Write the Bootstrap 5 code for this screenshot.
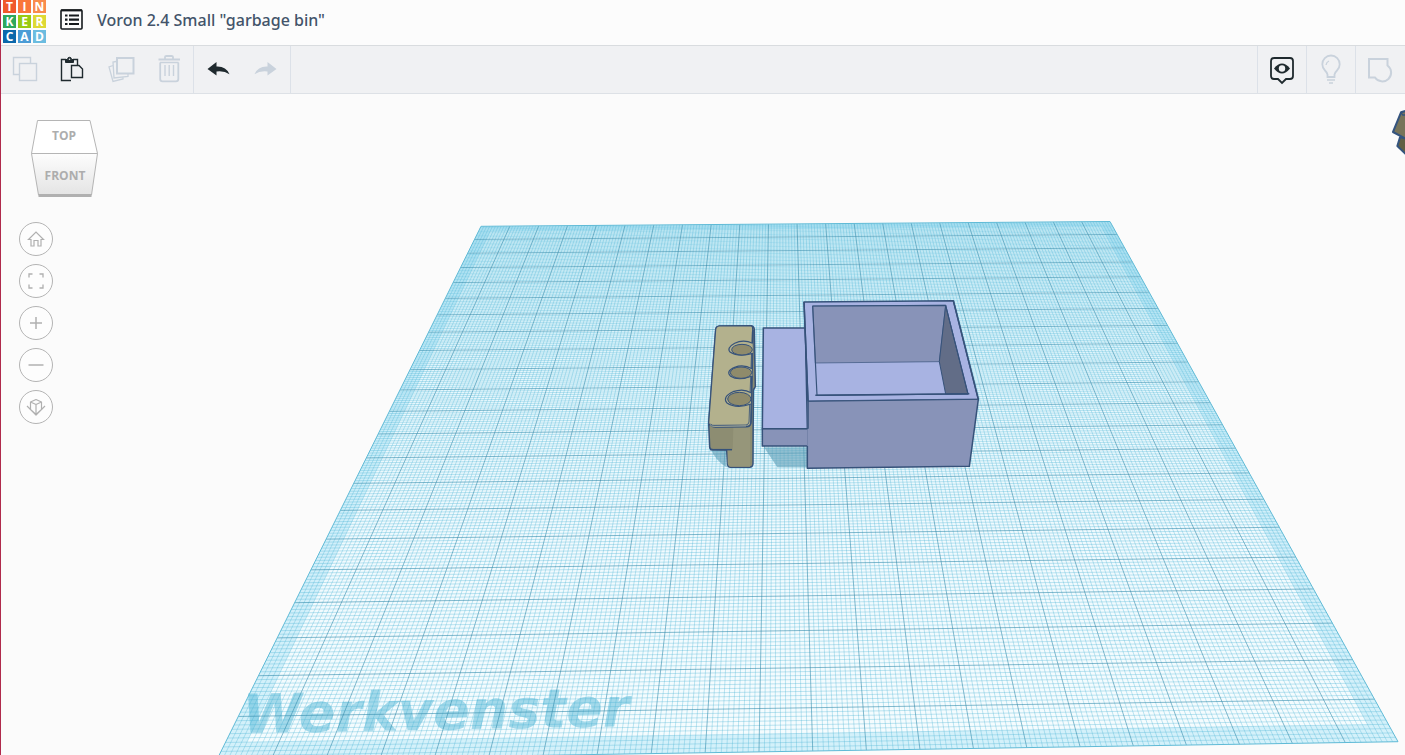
<!DOCTYPE html>
<html lang="nl">
<head>
<meta charset="utf-8">
<meta name="viewport" content="width=device-width, initial-scale=1">
<title>Voron 2.4 Small "garbage bin"</title>
<link href="https://cdn.jsdelivr.net/npm/bootstrap@5.3.0/dist/css/bootstrap.min.css" rel="stylesheet">
<style>
  body { font-family: "Noto Sans", sans-serif; background: #fbfbfb; border-left: 1px solid #b02a4c; }
  .top-bar { height: 45px; padding-bottom: 6px; background: #fcfcfc; }
  .logo { display: grid; grid-template-columns: repeat(3, 13px); grid-auto-rows: 13px; gap: 2px; width: 43px; margin-left: 2px; margin-right: 14px; }
  .logo span { font: 700 12px/13px "Open Sans", sans-serif; color: #fff; text-align: center; }
  .title { font-size: 16px; line-height: 24px; font-weight: 500; color: #43546a; }
  .tools { height: 49px; background: #f0f1f3; border-top: 1px solid #d9dcdf; border-bottom: 1px solid #dde1e6; }
  .tool { width: 48px; height: 47px; padding: 0; border: 0; background: none; color: #1f2a2e; }
  .tool:disabled { color: #c9d2dc; }
  .tool svg, .nav-round svg, .menu-btn svg { display: block; }
  .group-edge { border-right: 1px solid #dce1e8; }
  .tool.cell { width: 49px; border-left: 1px solid #dce1e8; }
  .tool.cell:last-child { width: 50px; }
  .menu-btn { padding: 0; border: 0; background: none; margin-right: 13px; }
  .side { padding: 24px 0 0 18px; width: 120px; }
  .cube { margin-left: 10px; margin-bottom: 16px; padding: 0; border: 0; background: none; width: 72px; height: 80px; }
  .nav-round { width: 34px; height: 34px; padding: 0; border: 1px solid #b4b4b4; border-radius: 50%; background: #fdfdfd; color: #b0b0b0; }
  .cube text { font: 700 12px "Open Sans", sans-serif; fill: #adadad; }
  .plane-name { font: italic 700 54px "DejaVu Sans", sans-serif; fill: #4bb4d6; fill-opacity: .48; }
</style>
</head>
<body class="vh-100 d-flex flex-column overflow-hidden">

<header class="top-bar d-flex align-items-center flex-shrink-0">
  <a class="logo align-self-start text-decoration-none" href="#" aria-label="Tinkercad">
    <span style="background:#f0592b">T</span><span style="background:#f9763a">I</span><span style="background:#f98b4c">N</span>
    <span style="background:#2fa85c">K</span><span style="background:#98cb12">E</span><span style="background:#ded935">R</span>
    <span style="background:#0b68ab">C</span><span style="background:#4b9cd6">A</span><span style="background:#6bbce0">D</span>
  </a>
  <button class="menu-btn" type="button" aria-label="Designs">
    <svg width="24" height="24" viewBox="0 0 24 24" fill="none" stroke="#15191c">
      <rect x="1" y="2" width="21" height="19" rx="1" stroke-width="1.6"/>
      <path d="M1 2.4H22" stroke-width="2"/>
      <path d="M5 7.5H7.5M5 11.7H7.5M5 16H7.5M9 7.5H19M9 11.7H19M9 16H19" stroke-width="2.2"/>
    </svg>
  </button>
  <h1 class="title m-0 text-nowrap">Voron 2.4 Small "garbage bin"</h1>
</header>

<div class="tools d-flex flex-shrink-0" role="toolbar">
  <button class="tool" type="button" disabled aria-label="Copy"><svg width="48" height="47" viewBox="1 46 48 47" fill="none" stroke="currentColor" stroke-width="1.4"><path d="M19.5 74.500H13.500V57.500H30.500V63.500"/><rect x="19.500" y="63.500" width="17" height="17"/></svg></button>
  <button class="tool" type="button" aria-label="Paste"><svg width="48" height="47" viewBox="49 46 48 47" fill="none" stroke="currentColor" stroke-width="1.400"><path d="M71 80.500H61.500V59.500H66M73 59.500H77.500V65M71.500 65.500H79L82.500 69V77.500H71.500Z"/><path d="M65.500 62.500V59.500H67.500Q67.500 57.300 69.500 57.300T71.500 59.500H73.500V62.500Z" fill="currentColor" stroke-width="1"/><circle cx="69.500" cy="59.300" r=".8" fill="#f0f1f3" stroke="none"/></svg></button>
  <button class="tool" type="button" disabled aria-label="Duplicate"><svg width="48" height="47" viewBox="97 46 48 47" fill="none" stroke="currentColor" stroke-width="1.300"><rect x="117" y="58" width="16.500" height="15.500" stroke-width="2"/><path d="M116 61.500L113 62L114 78L128 76.500V74M113 65.500L109 67L113 81.500L123 79V77.500"/></svg></button>
  <button class="tool" type="button" disabled aria-label="Delete"><svg width="48" height="47" viewBox="145 46 48 47" fill="none" stroke="currentColor" stroke-width="1.800"><path d="M158.500 59.500H180M165 59V57Q165 56 166.500 56H171.500Q173 56 173 57V59M160.200 62.500V79Q160.200 81.300 162.500 81.300H176Q178.300 81.300 178.300 79V62.500"/><path d="M160 62.500H178.500M165 65V76M169.200 65V76M173.500 65V76" stroke-width="1.400"/></svg></button>
  <span class="group-edge"></span>
  <button class="tool" type="button" aria-label="Undo"><svg width="48" height="47" viewBox="194 46 48 47" fill="currentColor"><path d="M207.500 69L216.500 62V66.500Q226 66 229.500 74.200Q224 70.500 216.500 71.500V75.500Z"/></svg></button>
  <button class="tool" type="button" disabled aria-label="Redo"><svg width="48" height="47" viewBox="242 46 48 47" fill="currentColor"><path d="M276.500 69L267.500 62V66.500Q258 66 254.500 74.200Q260 70.500 267.500 71.500V75.500Z"/></svg></button>
  <span class="group-edge"></span>
  <button class="tool cell ms-auto" type="button" aria-label="Show notes"><svg width="48" height="47" viewBox="1258 46 48 47" fill="none" stroke="currentColor" stroke-width="1.800"><path d="M1273.500 58H1290Q1293 58 1293 61V76Q1293 79 1290 79H1286L1282 83L1278 79H1274Q1271 79 1271 76V61Q1271 58 1274 58Z"/><path d="M1274 68.500Q1282 58.500 1290 68.500Q1282 78.500 1274 68.500Z" fill="currentColor" stroke="none"/><circle cx="1282" cy="68.500" r="3.200" fill="#f0f1f3" stroke="none"/></svg></button>
  <button class="tool cell" type="button" disabled aria-label="Tips"><svg width="48" height="47" viewBox="1307 46 48 47" fill="none" stroke="currentColor" stroke-width="1.800"><path d="M1327.500 77V74.500Q1327 72.500 1325 70.500A8.700 8.700 0 1 1 1337 70.500Q1335 72.500 1334.500 74.500V77Z"/><path d="M1327 80H1335M1329 83H1333M1326 65Q1326.500 62 1329 61" stroke-width="1.300"/></svg></button>
  <button class="tool cell" type="button" disabled aria-label="Group shapes"><svg width="48" height="47" viewBox="1356 46 48 47" fill="none" stroke="currentColor" stroke-width="2"><path d="M1369 59H1387.500V65.500A8.800 8.800 0 1 1 1375 77.500H1369Z"/></svg></button>
</div>

<main class="position-relative flex-grow-1 overflow-hidden">
  <svg class="position-absolute top-0 start-0 w-100 h-100" viewBox="1 94 1404 661" preserveAspectRatio="xMinYMin slice" role="img" aria-label="Werkvenster">
    <defs><linearGradient id="tint" x1="0" y1="0" x2="0" y2="1"><stop offset="0" stop-color="#dcf4fb"/><stop offset=".6" stop-color="#f0fafe"/><stop offset="1" stop-color="#f5fcfe"/></linearGradient></defs>
    <g fill="none">
      <path id="sheet" fill="url(#tint)"/>
      <path id="margin" fill="#8fdaf2" fill-opacity=".32" fill-rule="evenodd"/>
      <text class="plane-name" transform="translate(243 733) rotate(-1)">Werkvenster</text>
      <path id="minor" stroke="#45b0d4" stroke-opacity=".32"/>
      <path id="major" stroke="#3089aa" stroke-opacity=".58"/>
      <path id="outline" stroke="#5fbad6"/>
    </g>

    <!-- bin and magnet bracket -->
    <svg x="690" y="290" width="300" height="190" viewBox="0 0 900 570" stroke="#36527a" stroke-width="4.500" stroke-linejoin="round">
      <path d="M222 472H352V532H262Z" fill="#5c9db5" fill-opacity=".6" stroke="none"/>
      <path d="M62 476L110 480V532Q75 510 62 476Z" fill="#5c9db5" fill-opacity=".6" stroke="none"/>
      <path d="M220 114H346L352 416H217Z" fill="#a8b3e2"/>
      <path d="M217 416H354V468H217Z" fill="#8893b8" />
      <path d="M342 36L790 32L865 328L354 334Z" fill="#a8b3e2"/>
      <path d="M352 334L865 328L838 529L352 535Z" fill="#8893b8" stroke="none"/>
      <path d="M342 36L354 334V416M352 468V535L838 529L865 328L790 32" fill="none"/>
      <path d="M354 334L865 328" stroke-width="3"/>
      <path d="M217 416H354" stroke-width="3"/>
      <path d="M368 48L767 46L834 312L381 316Z" fill="#a8b3e2" stroke="none"/>
      <path d="M368 48L767 46L748 215L376 219Z" fill="#8893b8" stroke-width="2"/>
      <path d="M767 46L834 312H767L748 215Z" fill="#626d87" stroke-width="3"/>
      <path d="M368 48L767 46L834 312L381 316Z" fill="none" stroke-width="3.500"/>
      <path d="M376 316L838 311" stroke-width="4.500"/>

      <path d="M56 400L59 470Q59 479 69 479L110 480L113 524Q114 532 122 532H178Q189 532 189 520L190 300L196 290L194 190L193 120Q193 108 183 107L88 108Q78 109 77 119Z" fill="#8d8d72"/>
      <path d="M130 412H180V530H122Q113 530 113 515V480H128Z" fill="#96967a" stroke="none"/>
      <path d="M77 119Q78 109 88 108L183 107Q189 108 188 118L182 400Q181 408 172 409L66 407Q56 406 56 398Z" fill="#b3b18d" stroke-width="3.500"/>
      <path d="M62 402Q66 407 72 406L168 405Q176 404 177 396L187 125" fill="none" stroke-width="2.500"/>
      <path d="M59 402Q64 412 74 412L170 411Q183 411 184 396L190 120" fill="none" stroke-width="3"/>
      <path d="M60 404Q64 410 74 409L168 408" fill="none" stroke="#d1cfaa" stroke-width="2"/>
      <path d="M60 479H126"/>
      <g fill="#b3b18d" stroke-width="3.500">
        <path d="M188 160Q160 147 134 160Q108 174 121 187Q145 202 189 190"/>
        <path d="M186 236Q160 222 134 232Q106 244 122 259Q145 274 187 258"/>
        <path d="M183 308Q160 294 129 305Q97 320 110 338Q138 358 183 342"/>
      </g>
      <g fill="#8f8b6b" stroke-width="3">
        <ellipse cx="156" cy="179" rx="31" ry="16"/>
        <ellipse cx="153" cy="248" rx="32" ry="17"/>
        <ellipse cx="148" cy="327" rx="35" ry="20"/>
      </g>
    </svg>

    <svg x="1240" y="40" width="165" height="120" viewBox="0 0 495 360" stroke="#34547e" stroke-width="6" stroke-linejoin="round">
      <path d="M480 292L472 318L500 345V296Z" fill="#626045"/>
      <path d="M483 217L500 212V298L459 276Z" fill="#77745a"/>
      <path d="M483 217L488 225H500" fill="none" stroke-width="4"/>
    </svg>
  </svg>

  <nav class="side position-relative d-flex flex-column gap-2" aria-label="View">
    <button class="cube" type="button" aria-label="View cube">
      <svg class="d-block" width="72" height="80" viewBox="29 118 72 80">
        <defs><linearGradient id="face" x1="0" y1="0" x2="0" y2="1"><stop offset="0" stop-color="#fdfdfd"/><stop offset="1" stop-color="#e4e4e4"/></linearGradient></defs>
        <path d="M37.500 120.500H90L97.500 153.500H31.500Z" fill="#fff" stroke="#b5b5b5"/>
        <path d="M31.500 153.500H97.500L91.500 195H38.500Z" fill="url(#face)" stroke="#b5b5b5"/>
        <path d="M38.500 195.500H91.500" stroke="#b0b0b0" stroke-width="3"/>
        <text x="64" y="140" text-anchor="middle">TOP</text>
        <text x="65" y="180" text-anchor="middle">FRONT</text>
      </svg>
    </button>
    <button class="nav-round" type="button" aria-label="Home view"><svg width="32" height="32" viewBox="0 0 32 32" fill="none" stroke="currentColor" stroke-width="1.200"><path d="M8.500 16.500L16 9L23.500 16.500H21V23H18V17.500H14V23H11V16.500Z"/></svg></button>
    <button class="nav-round" type="button" aria-label="Fit all in view"><svg width="32" height="32" viewBox="0 0 32 32" fill="none" stroke="currentColor" stroke-width="1.300"><path d="M9 12.500V9H12.500M19.500 9H23V12.500M23 19.500V23H19.500M12.500 23H9V19.500"/></svg></button>
    <button class="nav-round" type="button" aria-label="Zoom in"><svg width="32" height="32" viewBox="0 0 32 32" stroke="currentColor" stroke-width="1.500"><path d="M10 16H22M16 10V22"/></svg></button>
    <button class="nav-round" type="button" aria-label="Zoom out"><svg width="32" height="32" viewBox="0 0 32 32" stroke="currentColor" stroke-width="1.500"><path d="M8.500 16H23.500"/></svg></button>
    <button class="nav-round" type="button" aria-label="Switch to flat view"><svg width="32" height="32" viewBox="0 0 32 32" fill="none" stroke="currentColor" stroke-width="1.200" stroke-linejoin="round"><path d="M10.500 11L16 8.500L21.500 11V18.500L16 23.500L10.500 18.500ZM10.500 11L16 13.500L21.500 11M16 13.500V23.500M7 15L16 24L25 15"/></svg></button>
  </nav>
</main>

<script src="https://cdn.jsdelivr.net/npm/bootstrap@5.3.0/dist/js/bootstrap.bundle.min.js"></script>
<script>
  // Perspective projection of the square workplane onto its four corners.
  const CELLS = 22, A = [481, 226.3], B = [1110, 221.5], C = [1398, 741.7], D = [216.5, 760.5];
  const dx1 = B[0] - C[0], dx2 = D[0] - C[0], sx = A[0] - B[0] + C[0] - D[0];
  const dy1 = B[1] - C[1], dy2 = D[1] - C[1], sy = A[1] - B[1] + C[1] - D[1];
  const det = dx1 * dy2 - dx2 * dy1;
  const g = (sx * dy2 - dx2 * sy) / det, h = (dx1 * sy - sx * dy1) / det;
  function point(u, v) {
    u /= CELLS; v /= CELLS;
    const w = g * u + h * v + 1;
    const x = ((B[0] - A[0] + g * B[0]) * u + (D[0] - A[0] + h * D[0]) * v + A[0]) / w;
    const y = ((B[1] - A[1] + g * B[1]) * u + (D[1] - A[1] + h * D[1]) * v + A[1]) / w;
    return x.toFixed(2) + ' ' + y.toFixed(2);
  }
  const line = (a, b, c, d) => 'M' + point(a, b) + 'L' + point(c, d);
  const quad = m => 'M' + [point(m, m), point(CELLS - m, m), point(CELLS - m, CELLS - m), point(m, CELLS - m)].join('L') + 'Z';
  let minor = '', major = '';
  for (let i = 1; i < CELLS * 10; i++) {
    const k = i / 10, d = line(k, 0, k, CELLS) + line(0, k, CELLS, k);
    if (i % 10) minor += d; else major += d;
  }
  const put = (id, d) => document.getElementById(id).setAttribute('d', d);
  put('sheet', quad(0));
  put('margin', quad(0) + quad(0.4));
  put('minor', minor);
  put('major', major);
  put('outline', quad(0));
</script>
</body>
</html>
